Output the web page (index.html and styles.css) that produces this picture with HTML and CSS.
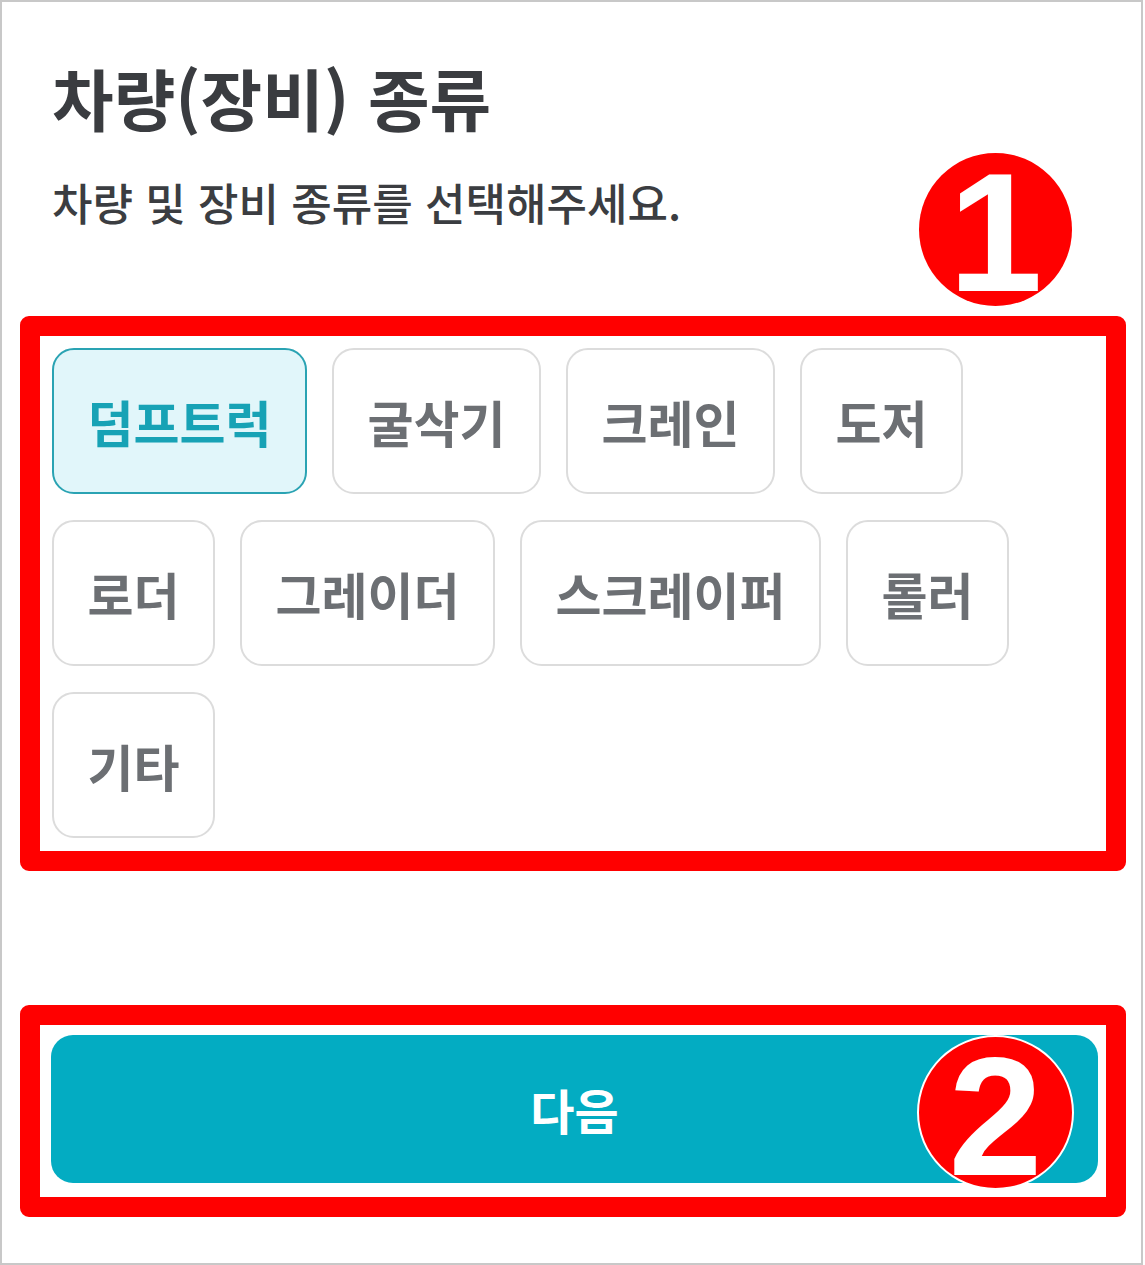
FILE: index.html
```html
<!DOCTYPE html>
<html lang="ko">
<head>
<meta charset="utf-8">
<title>차량(장비) 종류</title>
<link rel="stylesheet" href="styles.css">
</head>
<body>
<div class="page">
  <header class="header">
    <h1 class="title">차량(장비) 종류</h1>
    <p class="subtitle">차량 및 장비 종류를 선택해주세요.</p>
  </header>

  <section class="mark mark-chips">
    <div class="chips">
      <button class="chip chip-selected">덤프트럭</button>
      <button class="chip">굴삭기</button>
      <button class="chip">크레인</button>
      <button class="chip">도저</button>
      <button class="chip">로더</button>
      <button class="chip">그레이더</button>
      <button class="chip">스크레이퍼</button>
      <button class="chip">롤러</button>
      <button class="chip">기타</button>
    </div>
  </section>

  <section class="mark mark-next">
    <button class="next">다음</button>
  </section>

  <div class="badge badge-one"><span>1</span></div>
  <div class="badge badge-two"><span>2</span></div>
</div>
</body>
</html>
```

FILE: styles.css
```css
html, body {
  margin: 0;
  padding: 0;
  background: #ffffff;
}

.page {
  position: relative;
  box-sizing: border-box;
  width: 1143px;
  height: 1265px;
  border: 2px solid #c8c8c8;
  padding: 0 15px 0 18px;
  font-family: "Noto Sans CJK KR", "Noto Sans", sans-serif;
  background: #ffffff;
}

.header {
  padding: 53px 0 0 32px;
}

.title {
  margin: 0;
  font-size: 67px;
  line-height: 83px;
  font-weight: 700;
  color: #3a3c40;
  letter-spacing: 0;
}

.subtitle {
  margin: 35px 0 0 0;
  font-size: 44px;
  line-height: 59px;
  font-weight: 500;
  color: #3b3d41;
}

.mark {
  box-sizing: border-box;
  border: 20px solid #ff0000;
  border-radius: 9px;
}

.mark-chips {
  margin-top: 84px;
  padding: 12px 12px 13px 12px;
}

.chips {
  display: flex;
  flex-wrap: wrap;
  gap: 26px 25px;
}

.chip {
  box-sizing: border-box;
  height: 146px;
  display: flex;
  align-items: center;
  justify-content: center;
  padding: 0 33.5px;
  border: 2px solid #dcdcdc;
  border-radius: 22px;
  background: #ffffff;
  font-family: "Noto Sans CJK KR", "Noto Sans", sans-serif;
  font-size: 50px;
  font-weight: 700;
  color: #6c6f73;
  letter-spacing: 0;
}

.chip-selected {
  background: #e1f6fa;
  border-color: #2aa3b3;
  color: #17a2b5;
}

.mark-next {
  margin-top: 134px;
  padding: 10px 8px 14px 11px;
}

.next {
  display: flex;
  align-items: center;
  justify-content: center;
  width: 100%;
  height: 148px;
  border: none;
  border-radius: 22px;
  background: #03acc2;
  color: #ffffff;
  font-family: "Noto Sans CJK KR", "Noto Sans", sans-serif;
  font-size: 48px;
  font-weight: 700;
}

.badge {
  position: absolute;
  display: flex;
  align-items: center;
  justify-content: center;
  box-sizing: border-box;
  border-radius: 50%;
  background: #ff0000;
  color: #ffffff;
  font-family: "Liberation Sans", Arial, sans-serif;
  font-weight: 700;
  line-height: 1;
}

.badge-one {
  left: 917px;
  top: 151px;
  width: 153px;
  height: 153px;
  font-size: 169px;
  padding-top: 6px;
}

.badge-two {
  left: 915px;
  top: 1033px;
  width: 157px;
  height: 155px;
  border: 2px solid #ffffff;
  font-size: 169px;
  padding-top: 8px;
}
```
